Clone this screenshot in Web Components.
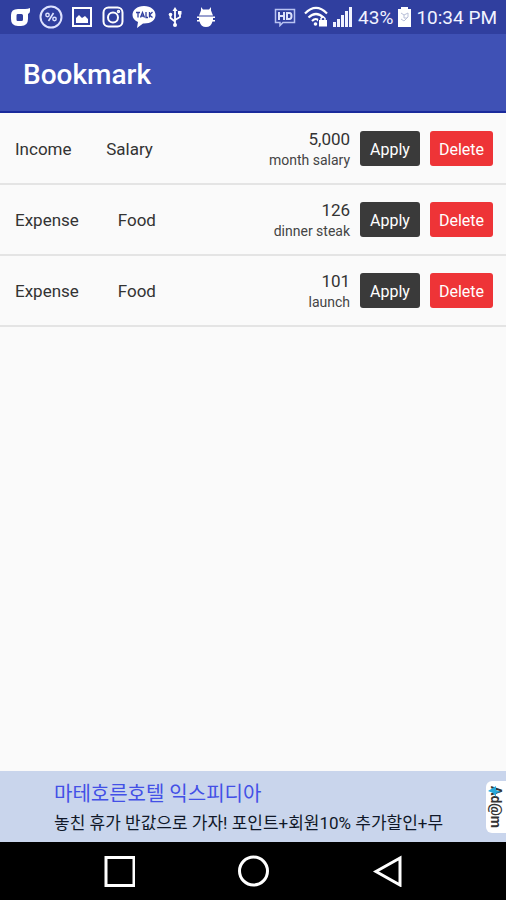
<!DOCTYPE html>
<html lang="en">
<head>
<meta charset="utf-8">
<meta name="viewport" content="width=device-width, initial-scale=1">
<title>Bookmark</title>
<style>
  html, body{
    margin: 0;
    height: 100%;
  }

  body{
    font-family: Roboto, "Noto Sans CJK KR", sans-serif;
    background: #fafafa;
    color: #333;
  }
</style>
</head>
<body>
<bookmark-app></bookmark-app>

<script>
class StatusBar extends HTMLElement{
  static get template(){
    return `
      <style>
        :host{
          display: flex;
          justify-content: space-between;
          align-items: center;
          height: 34px;
          padding: 0 9px 0 8px;
          background: #303f9f;
          color: #f1f3ff;
          font-size: 19px;
          white-space: nowrap;
        }

        div{
          display: flex;
          align-items: center;
        }

        .notes{ gap: 7px; }
        .system{ gap: 4px; }
        .hd{ margin-right: 4px; }
        svg{ display: block; }

        span, time{
          line-height: 22px;
          padding-top: 2px;
        }
      </style>

      <div class="notes">
        <svg width="24" height="24" viewBox="0 0 24 24"><path fill="#fff" fill-rule="evenodd" d="M22 3v3q0 2-2 3v5q0 7-7 7h-3q-7 0-7-7v-4q0-6 7-6h7q3 0 5-1zM9.500 9q-1 0-1 1.500v4q0 1.500 1 1.500h4q1.500 0 1.500-1.500v-4Q15 9 13.500 9z"/></svg>
        <svg width="24" height="24" viewBox="0 0 24 24" fill="none" stroke="#dde2ff"><circle cx="12" cy="12" r="10.500" stroke-width="2"/><path stroke-width="1.600" d="M9.500 16l5-8"/><circle cx="8.500" cy="10" r="1.700" stroke-width="1.400"/><circle cx="15.500" cy="14" r="1.700" stroke-width="1.400"/></svg>
        <svg width="24" height="24" viewBox="0 0 24 24"><path fill="none" stroke="#fff" stroke-width="2" d="M3 3h18v18H3z"/><path fill="#fff" d="M6 18v-5l3-3 3 3 3-2 3 3v4z"/></svg>
        <svg width="24" height="24" viewBox="0 0 24 24" fill="none" stroke="#fff" stroke-width="2"><rect x="2.500" y="2.500" width="19" height="19" rx="5"/><circle cx="12" cy="12.500" r="5"/><circle cx="17.500" cy="6.500" r=".7"/></svg>
        <svg width="24" height="24" viewBox="0 0 24 24"><path fill="#fff" d="M12 1c7 0 11.500 4 11.500 9S19 18.500 12 18.500l-1 0L5 23l1-6C2.500 15.500.5 13 .5 10 .5 5 5 1 12 1z"/><path fill="none" stroke="#303f9f" stroke-width="1.300" d="M4 7.500h4M6 7.500v5M8.500 12.500l2-5 2 5M9 11h3M14 7v5.500h2M17.500 7v5.500M20.500 7l-3 3 3 2.500"/></svg>
        <svg width="24" height="24" viewBox="0 0 24 24"><path fill="none" stroke="#fff" stroke-width="1.800" d="M12 5v15M7.500 10v3l4.500 3.500M17 8v4l-5 3"/><path fill="#fff" d="M12 2l2.500 4h-5zM15 6h3.500v3.500H15z"/><circle cx="7.500" cy="9.500" r="1.800" fill="#fff"/><circle cx="12" cy="20" r="2" fill="#fff"/></svg>
        <svg width="24" height="24" viewBox="0 0 24 24"><path fill="#fff" d="M7 2l2 2.500h6L17 2v3.500l2 5H5l2-5zM3 11.500h18V13h-2v2h2v1.500h-2.500Q17 22 12 22t-6.500-5.500H3V15h2v-2H3z"/></svg>
      </div>

      <div class="system">
        <svg class="hd" width="22" height="20" viewBox="0 0 22 20" fill="none" stroke="#b9c3f2"><path stroke-width="1.500" d="M1.500 2.500h19v13H9l-3 3v-3H1.500z"/><path stroke-width="2" stroke="#dce1fb" d="M5 5v8M10 5v8M5 9h5M13 6h2.500q2 0 2 3t-2 3H13z"/></svg>
        <svg width="24" height="22" viewBox="0 0 24 22"><path fill="none" stroke="#fff" stroke-width="2.200" d="M1 7.500Q12-3.500 23 7.500M4.500 11.500q7.500-7 15 0M8 15q4-4 7 0"/><circle cx="11.500" cy="18" r="1.800" fill="#fff"/><path fill="#fff" stroke="#303f9f" d="M14.500 13.500h9V21h-9z"/><path fill="none" stroke="#fff" stroke-width="1.500" d="M17 14v-1.500q2-3 4 0V14"/></svg>
        <svg width="22" height="20" viewBox="0 0 22 20" fill="#f1f3ff"><path d="M1 15h3v5H1zM5 12h3v8H5zM9 8h3v12H9zM13 4h3v16h-3zM17 0h3v20h-3z"/></svg>
        <span>43%</span>
        <svg width="15" height="20" viewBox="0 0 15 20"><path fill="#fff" d="M4 0h7v2h3v18H1V2h3z"/><path fill="none" stroke="#b8bfd8" d="M4 6l3 2 4-2v4l-4 4-3-2M7 8v3h3"/></svg>
        <time>10:34 PM</time>
      </div>
    `;
  }

  constructor(){
    super();
    this.attachShadow({ mode: 'open' });
    this.shadowRoot.innerHTML = StatusBar.template;
  }
}

class AppBar extends HTMLElement{
  static get template(){
    return `
      <style>
        :host{
          display: flex;
          align-items: center;
          box-sizing: border-box;
          height: 79px;
          padding: 4px 23px 0;
          background: #3f51b5;
          border-bottom: 2px solid #1a2a9c;
          color: #fff;
        }

        h1{
          margin: 0;
          font-size: 28px;
          font-weight: 500;
        }
      </style>
      <h1><slot></slot></h1>
    `;
  }

  constructor(){
    super();
    this.attachShadow({ mode: 'open' });
    this.shadowRoot.innerHTML = AppBar.template;
  }
}

class BookmarkRow extends HTMLElement{
  static get template(){
    return `
      <style>
        :host{
          display: flex;
          align-items: center;
          box-sizing: border-box;
          height: 71px;
          padding: 0 13px 0 15px;
          border-bottom: 2px solid #e4e4e4;
          font-size: 17px;
        }

        .category{
          min-width: 50px;
          margin-left: 33px;
          text-align: center;
        }

        .sum{
          flex: 1;
          padding-right: 10px;
          text-align: right;
          line-height: 22px;
        }

        .memo{
          color: #444;
          font-size: 14px;
          line-height: 20px;
        }

        button{
          height: 35px;
          padding: 2px 10px 0;
          border: 0;
          border-radius: 3px;
          background: #3a3a3a;
          color: #fff;
          font: 16px Roboto, sans-serif;
        }

        .delete{
          margin-left: 10px;
          padding: 2px 9px 0;
          background: #ee3437;
        }
      </style>

      <span class="type"><slot name="type"></slot></span>
      <span class="category"><slot name="category"></slot></span>
      <div class="sum">
        <div><slot name="amount"></slot></div>
        <div class="memo"><slot name="memo"></slot></div>
      </div>
      <button type="button" class="apply">Apply</button>
      <button type="button" class="delete">Delete</button>
    `;
  }

  constructor(){
    super();
    this.attachShadow({ mode: 'open' });
    this.shadowRoot.innerHTML = BookmarkRow.template;

    this.shadowRoot.querySelector('.apply').addEventListener('click', () => {
      this.dispatchEvent(new CustomEvent('apply', { bubbles: true }));
    });
    this.shadowRoot.querySelector('.delete').addEventListener('click', () => this.remove());
  }
}

class AdBanner extends HTMLElement{
  static get template(){
    return `
      <style>
        :host{
          display: flex;
          align-items: center;
          justify-content: space-between;
          box-sizing: border-box;
          height: 71px;
          padding-left: 54px;
          background: #c9d5ec;
          white-space: nowrap;
        }

        a{
          padding-top: 2px;
          color: #101828;
          font-size: 17px;
          line-height: 28px;
          text-decoration: none;
        }

        .title{
          display: block;
          color: #4350e6;
          font-size: 20px;
          line-height: 30px;
        }

        .brand{
          position: relative;
          box-sizing: border-box;
          width: 20px;
          height: 52px;
          border-radius: 6px 0 0 6px;
          background: #fff;
          color: #333;
          font-size: 14px;
          font-weight: 700;
          line-height: 20px;
          text-align: center;
          writing-mode: vertical-rl;
        }

        /* blue tip of the brand's A */
        .brand svg{
          position: absolute;
          top: 5px;
          left: 2px;
        }
      </style>

      <a href="#"><span class="title"><slot name="title"></slot></span><slot></slot></a>
      <div class="brand">Ad@m<svg width="14" height="11" viewBox="0 0 14 11"><path fill="#27a9dc" d="M0 5l8-5v4l5 2-5 1v4L5 7z"/></svg></div>
    `;
  }

  constructor(){
    super();
    this.attachShadow({ mode: 'open' });
    this.shadowRoot.innerHTML = AdBanner.template;
  }
}

class NavBar extends HTMLElement{
  static get template(){
    return `
      <style>
        :host{
          display: flex;
          align-items: center;
          justify-content: space-evenly;
          height: 58px;
          background: #000;
        }

        button{
          padding: 0;
          border: 0;
          background: none;
        }

        svg{
          display: block;
          fill: none;
          stroke: #fff;
          stroke-width: 3;
        }
      </style>

      <button type="button" aria-label="Recent apps"><svg width="32" height="32" viewBox="0 0 32 32"><path d="M3 2.500h28v28H3z"/></svg></button>
      <button type="button" aria-label="Home"><svg width="32" height="32" viewBox="0 0 32 32"><circle cx="16.500" cy="16" r="14"/></svg></button>
      <button type="button" aria-label="Back"><svg width="32" height="32" viewBox="0 0 32 32"><path d="M28 3v27L4 16.500z"/></svg></button>
    `;
  }

  constructor(){
    super();
    this.attachShadow({ mode: 'open' });
    this.shadowRoot.innerHTML = NavBar.template;
  }
}

class BookmarkApp extends HTMLElement{
  static get template(){
    return `
      <style>
        :host{
          display: flex;
          flex-direction: column;
          min-height: 100vh;
        }

        main{
          flex: 1;
          padding-top: 1px;
        }
      </style>

      <status-bar></status-bar>
      <app-bar>Bookmark</app-bar>
      <main></main>
      <ad-banner>
        <span slot="title" lang="ko">마테호른호텔 익스피디아</span>
        <span lang="ko">놓친 휴가 반값으로 가자! 포인트+회원10% 추가할인+무</span>
      </ad-banner>
      <nav-bar></nav-bar>
    `;
  }

  constructor(){
    super();
    this.attachShadow({ mode: 'open' });
    this.shadowRoot.innerHTML = BookmarkApp.template;
  }

  connectedCallback(){
    this.placeRows([
      { type: 'Income', category: 'Salary', amount: '5,000', memo: 'month salary' },
      { type: 'Expense', category: 'Food', amount: '126', memo: 'dinner steak' },
      { type: 'Expense', category: 'Food', amount: '101', memo: 'launch' }
    ]);
  }

  placeRows(items){
    const list = this.shadowRoot.querySelector('main');
    list.textContent = '';

    items.forEach(item => {
      const row = document.createElement('bookmark-row');

      for(let name in item){
        const span = document.createElement('span');
        span.slot = name;
        span.textContent = item[name];
        row.appendChild(span);
      }

      list.appendChild(row);
    });
  }
}

window.customElements.define('status-bar', StatusBar);
window.customElements.define('app-bar', AppBar);
window.customElements.define('bookmark-row', BookmarkRow);
window.customElements.define('ad-banner', AdBanner);
window.customElements.define('nav-bar', NavBar);
window.customElements.define('bookmark-app', BookmarkApp);
</script>
</body>
</html>
